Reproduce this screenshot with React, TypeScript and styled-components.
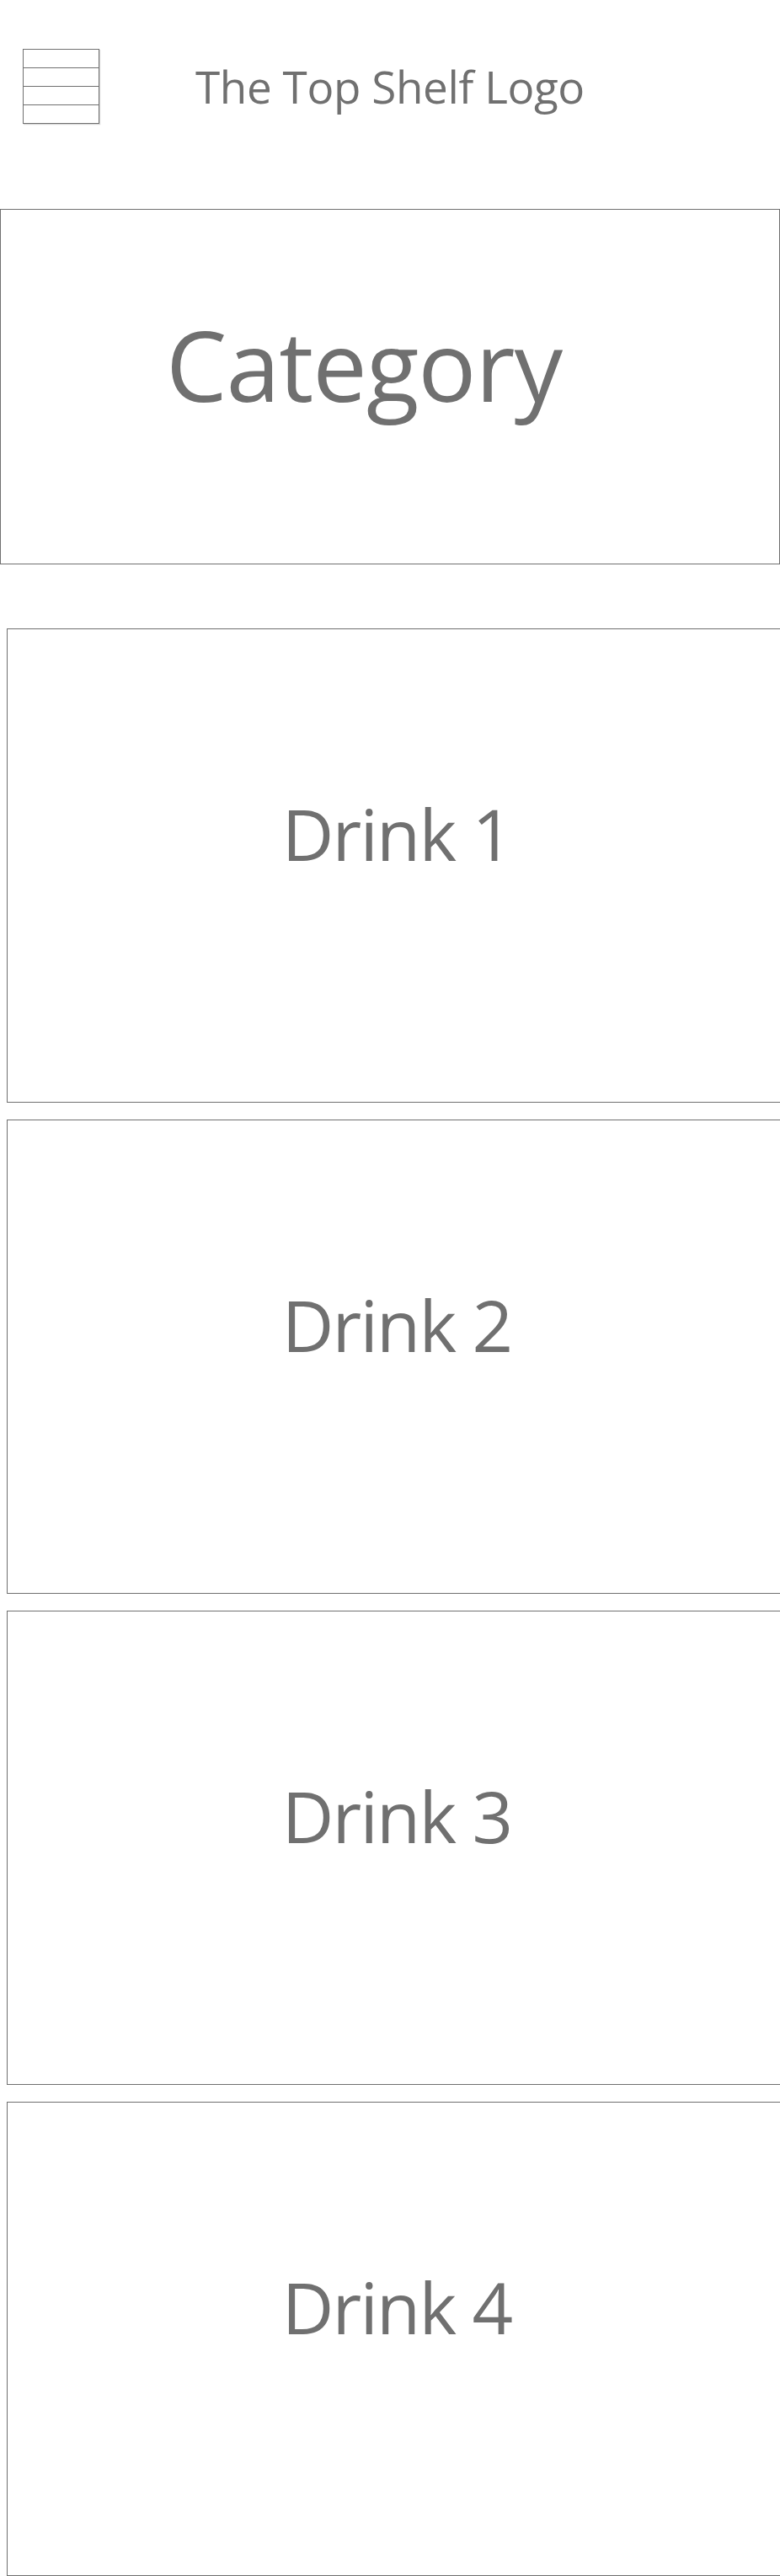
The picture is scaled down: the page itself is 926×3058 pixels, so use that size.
import styled, { createGlobalStyle } from 'styled-components';

const GlobalStyle = createGlobalStyle`
    html, body {
        margin: 0;
        padding: 0;
        background: #ffffff;
        overflow-x: hidden;
    }
    body {
        font-family: "Open Sans", "Noto Sans", sans-serif;
        color: #707070;
    }
`;

const drinks = ['Drink 1', 'Drink 2', 'Drink 3', 'Drink 4'];

export default function App(){
    return(
        <Page>
            <GlobalStyle/>
            <Header>
                <MenuButton aria-label="Menu">
                    <MenuRow/>
                    <MenuRow/>
                    <MenuRow/>
                    <MenuRow/>
                </MenuButton>
                <Logo>The Top Shelf Logo</Logo>
            </Header>
            <CategoryBanner>
                <CategoryTitle>Category</CategoryTitle>
            </CategoryBanner>
            <DrinkList>
                {drinks.map(name => (
                    <DrinkCard key={name}>
                        <DrinkName>{name}</DrinkName>
                    </DrinkCard>
                ))}
            </DrinkList>
        </Page>
    );
};

const Page = styled.div`
    width: 100%;
    overflow-x: hidden;
`;

const Header = styled.header`
    display: flex;
    align-items: flex-start;
    height: 248px;
    padding: 58px 0 0 27px;
    box-sizing: border-box;
`;

const MenuButton = styled.div`
    display: flex;
    flex-direction: column;
    width: 91px;
    box-shadow: 1px 1px 1px rgba(0, 0, 0, 0.16);
`;

const MenuRow = styled.div`
    height: 21px;
    border: 1px solid #707070;
    & + & {
        border-top: none;
    }
`;

const Logo = styled.h1`
    margin: 18px 0 0 114px;
    font-size: 53px;
    font-weight: 400;
    line-height: 1;
    letter-spacing: -0.4px;
    white-space: nowrap;
`;

const CategoryBanner = styled.section`
    box-sizing: border-box;
    width: 926px;
    height: 422px;
    border: 1px solid #707070;
    padding: 126px 0 0 196px;
`;

const CategoryTitle = styled.h2`
    margin: 0;
    font-size: 115px;
    font-weight: 400;
    line-height: 1;
    letter-spacing: -1px;
`;

const DrinkList = styled.div`
    display: flex;
    flex-direction: column;
    gap: 20px;
    margin-top: 76px;
`;

const DrinkCard = styled.article`
    box-sizing: border-box;
    width: 926px;
    height: 563px;
    margin-left: 8px;
    border: 1px solid #707070;
    display: flex;
    justify-content: center;
    padding-top: 200px;
`;

const DrinkName = styled.h3`
    margin: 0;
    font-size: 85px;
    font-weight: 400;
    line-height: 1;
    letter-spacing: -1.8px;
`;
